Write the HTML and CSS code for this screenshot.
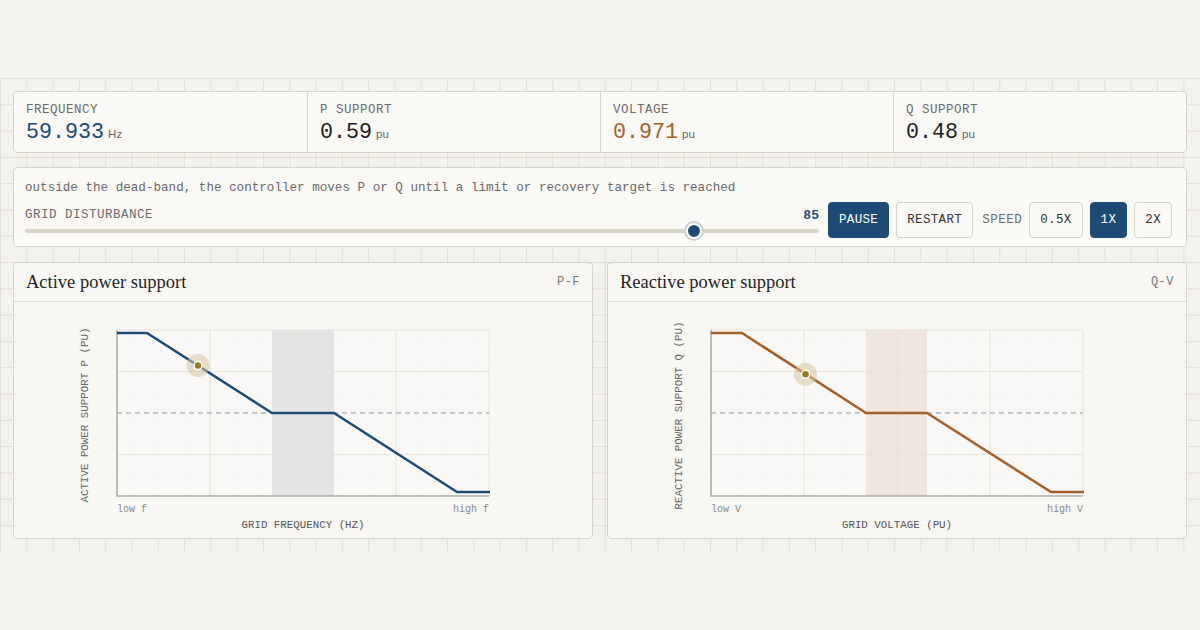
FILE: index.html
```html
<!DOCTYPE html>
<html>
<head>
	<meta name="viewport" content="width=device-width, initial-scale=1.0">
	<link rel="stylesheet" href="styles.css">
</head>
<body>
	<div class="stage">
		<!-- live readouts -->
		<div class="stats">
			<div class="stat">
				<div class="label">FREQUENCY</div>
				<div class="value blue">59.933<span class="unit">Hz</span></div>
			</div>
			<div class="stat">
				<div class="label">P SUPPORT</div>
				<div class="value">0.59<span class="unit">pu</span></div>
			</div>
			<div class="stat">
				<div class="label">VOLTAGE</div>
				<div class="value rust">0.971<span class="unit">pu</span></div>
			</div>
			<div class="stat">
				<div class="label">Q SUPPORT</div>
				<div class="value">0.48<span class="unit">pu</span></div>
			</div>
		</div>

		<!-- disturbance + playback -->
		<div class="controls">
			<p class="note">outside the dead-band, the controller moves P or Q until a limit or recovery target is reached</p>
			<div class="control-row">
				<div class="slider">
					<div class="slider-head">
						<span class="label">GRID DISTURBANCE</span>
						<span class="slider-val">85</span>
					</div>
					<div class="track">
						<div class="thumb" style="left: calc(8px + (100% - 16px) * 0.85);"></div>
					</div>
				</div>
				<button class="btn primary" type="button">PAUSE</button>
				<button class="btn" type="button">RESTART</button>
				<span class="label speed">SPEED</span>
				<button class="btn" type="button">0.5X</button>
				<button class="btn primary" type="button">1X</button>
				<button class="btn" type="button">2X</button>
			</div>
		</div>

		<!-- droop curves -->
		<div class="charts">
			<div class="chart">
				<div class="chart-head">
					<h2>Active power support</h2>
					<span class="tag">P-F</span>
				</div>
				<svg width="578" height="236" viewBox="0 0 578 236">
					<rect class="plot-bg" x="103" y="28" width="372" height="166"/>
					<rect class="band band-p" x="258" y="28" width="62" height="166"/>
					<g class="grid">
						<line x1="196" y1="28" x2="196" y2="194"/>
						<line x1="289" y1="28" x2="289" y2="194"/>
						<line x1="382" y1="28" x2="382" y2="194"/>
						<line x1="475" y1="28" x2="475" y2="194"/>
						<line x1="103" y1="28" x2="475" y2="28"/>
						<line x1="103" y1="69.5" x2="475" y2="69.5"/>
						<line x1="103" y1="152.5" x2="475" y2="152.5"/>
					</g>
					<line class="ref" x1="103" y1="111" x2="475" y2="111"/>
					<polyline class="axis" points="103,28 103,194 475,194"/>
					<polyline class="curve curve-p" points="103,31 133,31 258,111 320,111 443,190 476,190"/>
					<circle class="halo" cx="184" cy="63.6" r="11.5"/>
					<circle class="dot" cx="184" cy="63.6" r="4"/>
					<text class="tick" x="103" y="209.5">low f</text>
					<text class="tick" x="475" y="209.5" text-anchor="end">high f</text>
					<text class="axis-title" x="289" y="226" text-anchor="middle">GRID FREQUENCY (HZ)</text>
					<text class="axis-title y" transform="translate(74 113) rotate(-90)" text-anchor="middle">ACTIVE POWER SUPPORT P (PU)</text>
				</svg>
			</div>
			<div class="chart">
				<div class="chart-head">
					<h2>Reactive power support</h2>
					<span class="tag">Q-V</span>
				</div>
				<svg width="578" height="236" viewBox="0 0 578 236">
					<rect class="plot-bg" x="103" y="28" width="372" height="166"/>
					<rect class="band band-q" x="258" y="28" width="61" height="166"/>
					<g class="grid">
						<line x1="196" y1="28" x2="196" y2="194"/>
						<line x1="289" y1="28" x2="289" y2="194"/>
						<line x1="382" y1="28" x2="382" y2="194"/>
						<line x1="475" y1="28" x2="475" y2="194"/>
						<line x1="103" y1="28" x2="475" y2="28"/>
						<line x1="103" y1="69.5" x2="475" y2="69.5"/>
						<line x1="103" y1="152.5" x2="475" y2="152.5"/>
					</g>
					<line class="ref" x1="103" y1="111" x2="475" y2="111"/>
					<polyline class="axis" points="103,28 103,194 475,194"/>
					<polyline class="curve curve-q" points="103,31 134,31 258,111 319,111 443,190 476,190"/>
					<circle class="halo" cx="197.5" cy="72.3" r="11.5"/>
					<circle class="dot" cx="197.5" cy="72.3" r="4"/>
					<text class="tick" x="103" y="209.5">low V</text>
					<text class="tick" x="475" y="209.5" text-anchor="end">high V</text>
					<text class="axis-title" x="289" y="226" text-anchor="middle">GRID VOLTAGE (PU)</text>
					<text class="axis-title y" transform="translate(74 113.5) rotate(-90)" text-anchor="middle">REACTIVE POWER SUPPORT Q (PU)</text>
				</svg>
			</div>
		</div>
	</div>
</body>
</html>
```

FILE: styles.css
```css
:root {
	--bg: #f3f2ed;
	--grid-line: #e1ded4;
	--card: #faf9f6;
	--border: #d6d3c8;
	--blue: #1d4b76;
	--rust: #a5602a;
	--ink: #1c1c1c;
	--muted: #6b6b6b;
	--mono: "Liberation Mono", "DejaVu Sans Mono", monospace;
}

body {
	margin: 0;
	background: var(--bg);
	color: var(--ink);
	font-family: var(--mono);
}

.stage {
	box-sizing: border-box;
	height: 473px;
	margin-top: 78px;
	padding: 13px;
	display: flex;
	flex-direction: column;
	gap: 14px;
	background-color: var(--bg);
	background-image:
		linear-gradient(to right, var(--grid-line) 1px, transparent 1px),
		linear-gradient(to bottom, var(--grid-line) 1px, transparent 1px);
	background-size: 26.3px 26.3px;
}

.label {
	font-size: 12.5px;
	letter-spacing: .5px;
	line-height: 16px;
	color: var(--muted);
}

/* readouts */
.stats {
	box-sizing: border-box;
	height: 62px;
	flex: none;
	display: grid;
	grid-template-columns: repeat(4, 1fr);
	background: var(--card);
	border: 1px solid var(--border);
	border-radius: 4px;
}

.stat {
	padding: 10px 12px 0;
}

.stat + .stat {
	border-left: 1px solid var(--border);
}

.value {
	margin-top: 2px;
	font-size: 21.7px;
	line-height: 26px;
	color: var(--ink);
}

.value.blue { color: var(--blue); }
.value.rust { color: var(--rust); }

.unit {
	margin-left: 4px;
	font-family: "Liberation Sans", Arial, sans-serif;
	font-size: 11.5px;
	color: #666;
}

/* controls */
.controls {
	box-sizing: border-box;
	height: 80px;
	flex: none;
	padding: 12px 14px 8px 11px;
	background: var(--card);
	border: 1px solid var(--border);
	border-radius: 4px;
}

.note {
	margin: 0;
	font-size: 12.6px;
	line-height: 16px;
	color: #6a6a6a;
}

.control-row {
	display: flex;
	align-items: center;
	gap: 7px;
	margin-top: 6px;
}

.slider {
	flex: 1;
	align-self: flex-start;
	padding-top: 4px;
	margin-right: 2px;
}

.slider-head {
	display: flex;
	justify-content: space-between;
	align-items: center;
	height: 18px;
}

.slider-val {
	font-size: 13px;
	font-weight: bold;
	color: var(--blue);
}

.track {
	position: relative;
	height: 4px;
	margin-top: 5px;
	background: #d9d6c6;
	border-radius: 2px;
}

.thumb {
	position: absolute;
	top: 50%;
	width: 12px;
	height: 12px;
	background: var(--blue);
	border: 2px solid #fff;
	border-radius: 50%;
	box-shadow: 0 0 0 2px #cdd1d4;
	transform: translate(-50%, -50%);
}

.btn {
	box-sizing: border-box;
	height: 36px;
	padding: 0 10px;
	background: #fbfaf7;
	border: 1px solid var(--border);
	border-radius: 4px;
	color: #333;
	font-family: var(--mono);
	font-size: 12.5px;
	letter-spacing: .35px;
	cursor: pointer;
	-webkit-appearance: none;
}

.btn.primary {
	background: var(--blue);
	border-color: var(--blue);
	color: #fff;
}

.speed {
	margin: 0 0 0 2px;
}

/* charts */
.charts {
	flex: 1;
	display: grid;
	grid-template-columns: 1fr 1fr;
	gap: 14px;
	margin-top: 1px;
}

.chart {
	background: rgba(250, 249, 246, .78);
	border: 1px solid var(--border);
	border-radius: 4px;
	overflow: hidden;
}

.chart-head {
	height: 38px;
	display: flex;
	align-items: center;
	justify-content: space-between;
	padding: 0 12px;
	border-bottom: 1px solid #dedbd1;
}

.chart-head h2 {
	margin: 0;
	font-family: "Liberation Serif", "Times New Roman", serif;
	font-size: 18.5px;
	font-weight: normal;
	color: #1f1f1f;
}

.tag {
	font-size: 12px;
	letter-spacing: .5px;
	color: #777;
}

.chart svg {
	display: block;
}

.plot-bg { fill: rgba(250, 249, 246, .6); }
.band-p { fill: #e3e5e4; }
.band-q { fill: #efe6df; }

.grid line {
	stroke: #e6e3da;
	stroke-width: 1;
}

.ref {
	stroke: #8f969b;
	stroke-width: 1.2;
	stroke-dasharray: 5 4;
}

.axis {
	fill: none;
	stroke: #abaaa2;
	stroke-width: 1.5;
}

.curve {
	fill: none;
	stroke-width: 2.6;
	stroke-linejoin: round;
}

.curve-p { stroke: var(--blue); }
.curve-q { stroke: var(--rust); }

.halo { fill: rgba(214, 200, 164, .55); }

.dot {
	fill: #9a7a26;
	stroke: #fff;
	stroke-width: 1.5;
}

.tick {
	font-family: var(--mono);
	font-size: 10px;
	fill: #8a8a8a;
}

.axis-title {
	font-family: var(--mono);
	font-size: 10.8px;
	fill: #555;
}

.axis-title.y {
	fill: #666;
}
```
